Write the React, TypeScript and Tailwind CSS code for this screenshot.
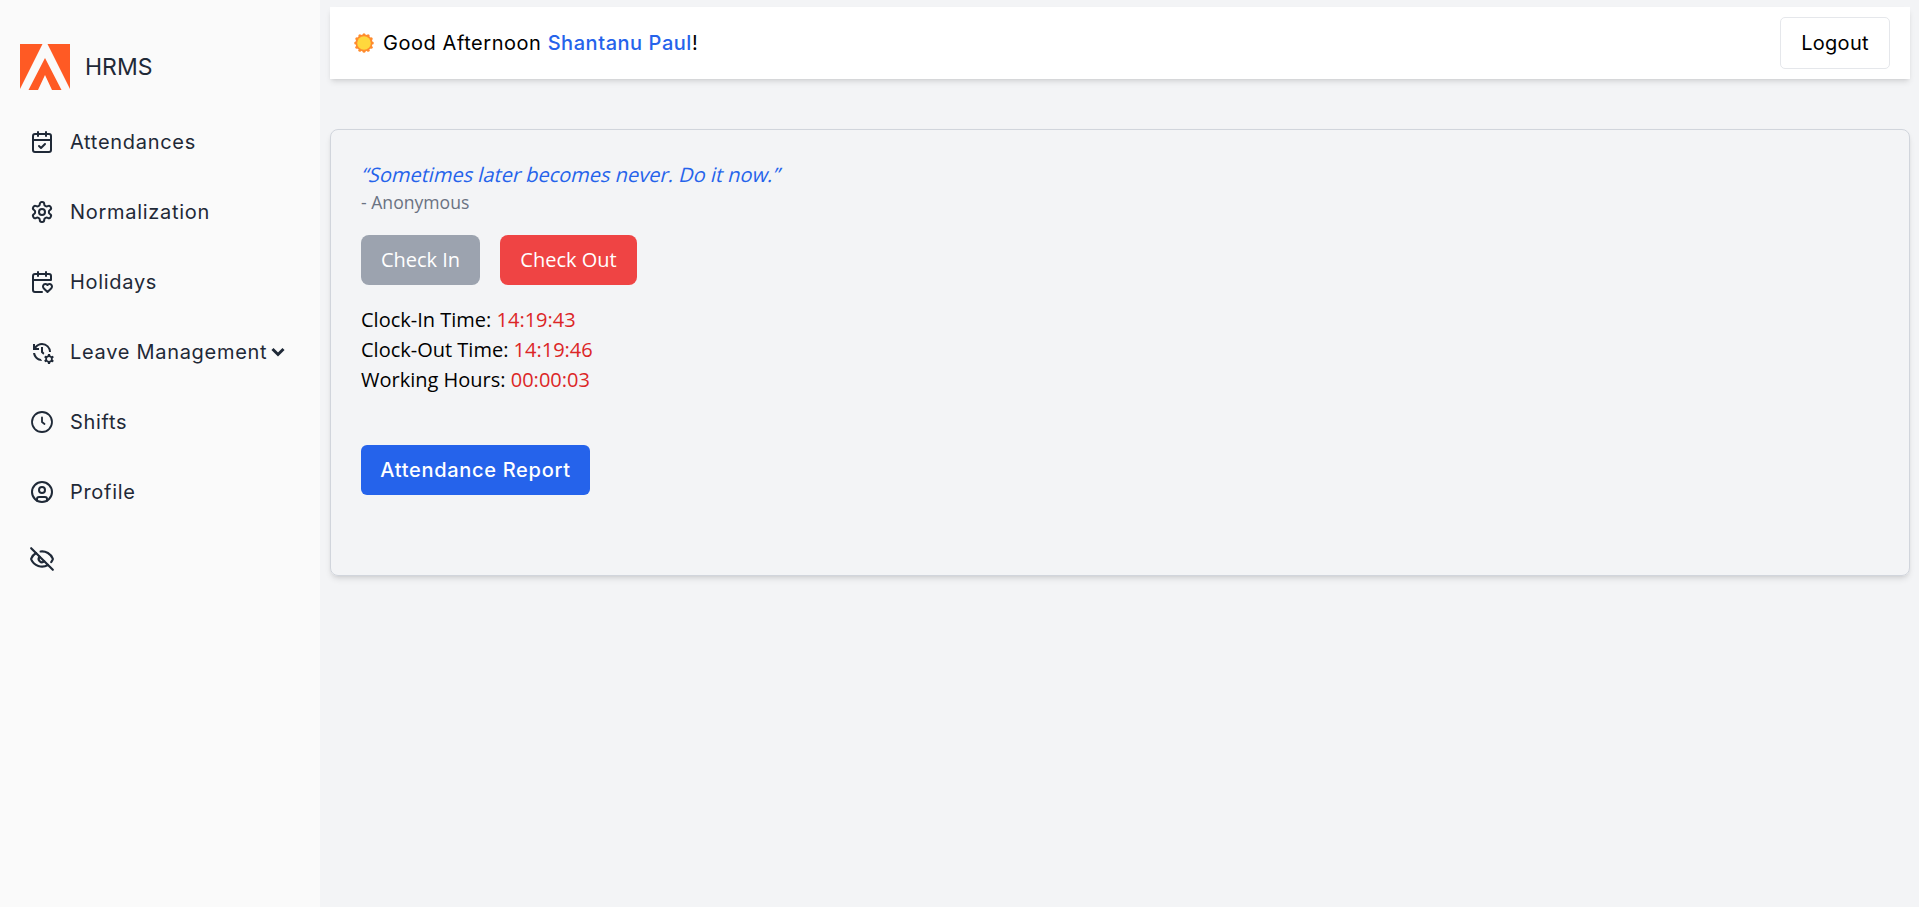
import React from "react";
import { LuCalendarCheck, LuSettings, LuCalendarHeart, LuCircleUser, LuEyeOff } from "react-icons/lu";
import { MdOutlineManageHistory } from "react-icons/md";

const poppins = "font-['Inter','Noto_Sans',sans-serif]";

function Logo() {
  return (
    <svg width="50" height="46" viewBox="0 0 50 46" className="shrink-0">
      <path d="M0 0 H22.500 L0 45 Z" fill="#ff5a24" />
      <path d="M27.500 0 H50 V45 Z" fill="#ff5a24" />
      <path d="M25 14 L41.500 46 H32 L25 31 L18 46 H8.500 Z" fill="#ff5a24" />
    </svg>
  );
}

function Sun() {
  const teeth = Array.from({ length: 12 }, (_, i) => (i * Math.PI) / 6);
  return (
    <svg width="20" height="20" viewBox="0 0 20 20" className="shrink-0">
      {teeth.map((a) => (
        <circle key={a} cx={10 + 8.3 * Math.cos(a)} cy={10 + 8.3 * Math.sin(a)} r="1.500" fill="#ff8c2e" />
      ))}
      <circle cx="10" cy="10" r="8.500" fill="#ff8c2e" />
      <circle cx="10" cy="10" r="6.800" fill="#ffd83d" />
    </svg>
  );
}

function ClockIcon({ size }: { size: number }) {
  return (
    <svg width={size} height={size} viewBox="0 0 24 24" fill="none" stroke="currentColor" strokeWidth="1.800" strokeLinecap="round" strokeLinejoin="round" className="shrink-0">
      <circle cx="12" cy="12" r="10" />
      <path d="M12 7.500v4.500l2.500 2" />
    </svg>
  );
}

const items = [
  { label: "Attendances", icon: <LuCalendarCheck size={24} strokeWidth={2} className="shrink-0" /> },
  { label: "Normalization", icon: <LuSettings size={24} strokeWidth={2} className="shrink-0" /> },
  { label: "Holidays", icon: <LuCalendarHeart size={24} strokeWidth={2} className="shrink-0" /> },
  { label: "Leave Management", icon: <MdOutlineManageHistory size={24} className="shrink-0" />, chevron: true },
  { label: "Shifts", icon: <ClockIcon size={24} /> },
  { label: "Profile", icon: <LuCircleUser size={24} strokeWidth={2} className="shrink-0" /> },
];

export default function App() {
  return (
    <div className="flex h-[907px] w-[1919px] overflow-hidden bg-[#f3f4f6] font-['Open_Sans',sans-serif]">
      <aside className={`w-[320px] shrink-0 bg-[#fafafa] text-[#1f2937] ${poppins}`}>
        <div className="flex items-center gap-[15px] pl-5 pt-[44px]">
          <Logo />
          <span className="text-[23px]">HRMS</span>
        </div>
        <nav className="mt-[17px] pl-[30px]">
          {items.map(({ label, icon, chevron }) => (
            <div key={label} className="flex h-[70px] items-center">
              {icon}
              <span className="ml-4 text-[20px] leading-none tracking-[0.7px]">{label}</span>
              {chevron && (
                <svg width="14" height="10" viewBox="0 0 14 10" fill="none" stroke="currentColor" strokeWidth="3" className="ml-[4px] shrink-0">
                  <path d="M1.500 2 L7 7.500 L12.500 2" />
                </svg>
              )}
            </div>
          ))}
          <div className="flex h-[64px] items-center">
            <LuEyeOff size={26} strokeWidth={2} className="-ml-px" />
          </div>
        </nav>
      </aside>
      <main className="flex-1 pl-[10px] pr-[9px] pt-[7px]">
        <header className="flex h-[72px] items-center justify-between bg-white pl-6 pr-[20px] shadow-md">
          <div className={`flex items-center gap-[9px] text-[20px] tracking-[0.55px] text-black ${poppins}`}>
            <Sun />
            <span>
              Good Afternoon <span className="font-medium text-[#2563eb]">Shantanu Paul</span>!
            </span>
          </div>
          <button className={`h-[52px] w-[110px] rounded-[5px] border border-gray-200 bg-white text-[20px] tracking-[0.3px] text-black ${poppins}`}>
            Logout
          </button>
        </header>
        <section className="mt-[50px] h-[447px] rounded-lg border border-gray-300 px-[30px] pt-[31px] shadow-md">
          <p className="w-fit origin-[0_20px] skew-x-[-14deg] text-[20px] leading-[28px] text-[#2563eb]">“Sometimes later becomes never. Do it now.”</p>
          <p className="text-[17.6px] leading-[27px] text-gray-500">- Anonymous</p>
          <div className="mt-[19px] flex gap-5">
            <button className="h-[50px] w-[119px] rounded-lg bg-[#9ca3af] text-[20px] text-white">Check In</button>
            <button className="h-[50px] w-[137px] rounded-lg bg-[#ef4444] text-[20px] text-white">Check Out</button>
          </div>
          <div className="mt-[20px] text-[20px] leading-[30px] text-black">
            <p>Clock-In Time: <span className="text-[#dc2626]">14:19:43</span></p>
            <p>Clock-Out Time: <span className="text-[#dc2626]">14:19:46</span></p>
            <p>Working Hours: <span className="text-[#dc2626]">00:00:03</span></p>
          </div>
          <button className={`mt-[50px] h-[50px] w-[229px] rounded-md bg-[#2563eb] text-[20px] font-medium tracking-[0.7px] text-white ${poppins}`}>
            Attendance Report
          </button>
        </section>
      </main>
    </div>
  );
}
